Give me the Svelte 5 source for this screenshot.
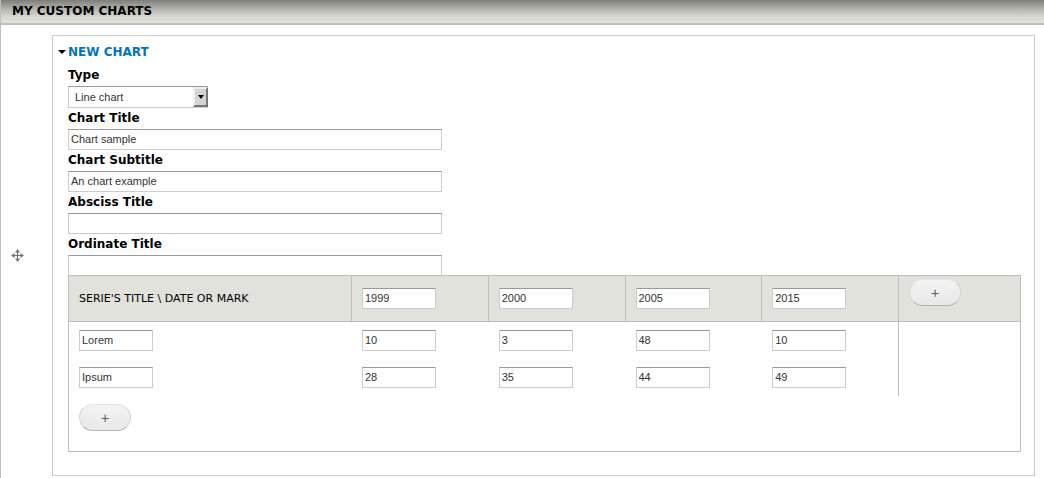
<script>
    let type = "line";

    let fields = [
        {name: "chart-title", label: "Chart Title", value: "Chart sample"},
        {name: "chart-subtitle", label: "Chart Subtitle", value: "An chart example"},
        {name: "absciss-title", label: "Absciss Title", value: ""},
        {name: "ordinate-title", label: "Ordinate Title", value: ""}
    ];

    let marks = ["1999", "2000", "2005", "2015"];

    let series = [
        {title: "Lorem", values: ["10", "3", "48", "10"]},
        {title: "Ipsum", values: ["28", "35", "44", "49"]}
    ];

    let open = true;

    function addMark() {
        marks = [...marks, ""];
        series = series.map((serie) => ({...serie, values: [...serie.values, ""]}));
    }

    function addSerie() {
        series = [...series, {title: "", values: marks.map(() => "")}];
    }

    function toggle(event) {
        event.preventDefault();
        open = !open;
    }
</script>

<main>
    <h1>My custom charts</h1>
    <div class="row">
        <a class="handle" href="#move" title="Drag to re-order" aria-label="Drag to re-order">
            <svg width="13" height="13" viewBox="0 0 13 13">
                <path d="M6.5 1v11M1 6.5h11" stroke="#666" fill="none"/>
                <path d="M4 3.5l2.5-3.5 2.5 3.5zM4 9.5l2.5 3.5 2.5-3.5zM3.5 4l-3.5 2.5 3.5 2.5zM9.5 4l3.5 2.5-3.5 2.5z" fill="#777"/>
            </svg>
        </a>
        <fieldset>
            <legend>
                <a href="#chart" class:closed={!open} on:click={toggle}>New chart</a>
            </legend>
            {#if open}
                <div class="field">
                    <label for="chart-type">Type</label>
                    <div class="select">
                        <select id="chart-type" bind:value={type}>
                            <option value="line">Line chart</option>
                            <option value="bar">Bar chart</option>
                            <option value="pie">Pie chart</option>
                        </select>
                        <span class="arrow"></span>
                    </div>
                </div>
                {#each fields as field}
                    <div class="field">
                        <label for={field.name}>{field.label}</label>
                        <input id={field.name} class="wide" type="text" bind:value={field.value}/>
                    </div>
                {/each}
                <table>
                    <thead>
                        <tr>
                            <th class="title">Serie's title \ date or mark</th>
                            {#each marks as mark, i}
                                <th><input type="text" aria-label="Mark {i + 1}" bind:value={mark}/></th>
                            {/each}
                            <th class="add"><button type="button" aria-label="Add a mark" on:click={addMark}>+</button></th>
                        </tr>
                    </thead>
                    <tbody>
                        {#each series as serie, s}
                            <tr>
                                <td><input type="text" aria-label="Serie {s + 1}" bind:value={serie.title}/></td>
                                {#each serie.values as value, i}
                                    <td><input type="text" aria-label="{serie.title} {marks[i]}" bind:value={value}/></td>
                                {/each}
                                <td class="end"></td>
                            </tr>
                        {/each}
                        <tr>
                            <td class="more" colspan={marks.length + 2}>
                                <button type="button" aria-label="Add a serie" on:click={addSerie}>+</button>
                            </td>
                        </tr>
                    </tbody>
                </table>
            {/if}
        </fieldset>
    </div>
</main>

<style>
    :global(body) {
        background: #fff;
    }

    main {
        border-left: 1px solid #bebfb9;
        font-family: "DejaVu Sans", sans-serif;
        font-size: 12px;
        color: #000;
    }

    h1 {
        margin: 0;
        padding: 0 11px 1px;
        border-bottom: 2px solid #bebfb9;
        background: linear-gradient(#7d7e79, #b4b5af 40%, #d4d5cf 70%, #e1e2dc);
        font-size: 12px;
        line-height: 22px;
        text-transform: uppercase;
    }

    .row {
        display: flex;
        align-items: center;
        padding: 10px 9px 10px 0;
    }

    .handle {
        display: flex;
        flex: none;
        box-sizing: border-box;
        width: 51px;
        padding-left: 10px;
    }

    fieldset {
        flex: 1;
        min-width: 0;
        margin: 0;
        padding: 6px 13px 23px 15px;
        border: 1px solid #ccc;
    }

    legend {
        float: left;
        width: 100%;
        margin-bottom: 3px;
        padding: 0;
        line-height: 20px;
    }

    legend a {
        display: flex;
        align-items: center;
        gap: 2px;
        margin-left: -10px;
        color: #0074bd;
        font-weight: bold;
        text-decoration: none;
        text-transform: uppercase;
    }

    legend a::before {
        content: "";
        border: 4px solid transparent;
        border-top-color: #000;
        border-bottom: 0;
    }

    legend a.closed::before {
        transform: rotate(-90deg);
    }

    .field {
        clear: both;
    }

    label {
        display: block;
        font-weight: bold;
        line-height: 21px;
    }

    input, select {
        display: block;
        box-sizing: border-box;
        border: 1px solid #ccc;
        border-top-color: #999;
        border-radius: 0;
        background: #fff;
        color: #333;
        font-family: "Liberation Sans", Arial, sans-serif;
        font-size: 11px;
    }

    input {
        width: 74px;
        height: 21px;
        padding: 1px 2px 3px;
    }

    .wide {
        width: 374px;
        max-width: 100%;
    }

    .select {
        position: relative;
        width: 140px;
    }

    select {
        appearance: none;
        width: 100%;
        height: 22px;
        padding: 0 20px 0 6px;
    }

    .arrow {
        position: absolute;
        top: 1px;
        right: 0;
        bottom: 1px;
        box-sizing: border-box;
        display: flex;
        align-items: center;
        justify-content: center;
        width: 15px;
        border: 2px solid;
        border-color: #eee #777 #777 #eee;
        background: #d4d4d4;
        pointer-events: none;
    }

    .arrow::before {
        content: "";
        border: 3px solid transparent;
        border-top: 4px solid #000;
        border-bottom: 0;
    }

    table {
        width: 100%;
        margin-top: -1px;
        border: 1px solid #bebfb9;
        border-collapse: collapse;
        table-layout: fixed;
    }

    th {
        padding: 12px 10px;
        border: 1px solid #bebfb9;
        background: #e1e2dc;
        font-size: 11px;
        font-weight: normal;
        text-align: left;
        text-transform: uppercase;
    }

    .title {
        width: 262px;
    }

    .add {
        width: 101px;
        padding: 3px 10px;
        vertical-align: top;
    }

    td {
        padding: 8px 10px;
    }

    td + td {
        border-left: 1px solid transparent;
    }

    td.end {
        border-left-color: #bebfb9;
    }

    .more {
        padding-bottom: 20px;
    }

    button {
        display: block;
        box-sizing: border-box;
        width: 52px;
        height: 27px;
        padding: 0;
        border: 1px solid #e4e4e4;
        border-color: #e4e4e4 #d2d2d2 #b4b4b4;
        border-radius: 14px;
        background: linear-gradient(#f3f3f3, #e8e8e8);
        color: #5a5a5a;
        font-family: "Liberation Sans", Arial, sans-serif;
        font-size: 14px;
        cursor: pointer;
    }
</style>
